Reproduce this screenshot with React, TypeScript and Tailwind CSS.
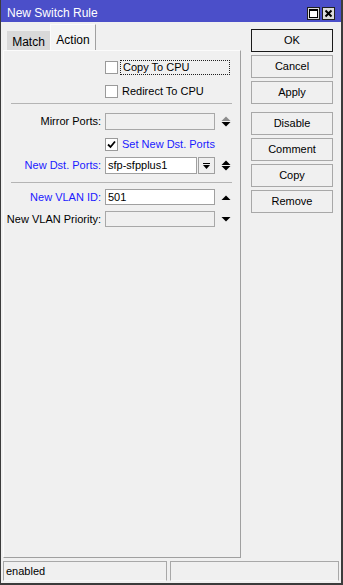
import React from 'react';

// small triangle glyphs used by the spinners next to the fields
function Up({ gray = false }: { gray?: boolean }) {
  return (
    <svg width="10" height="5" viewBox="0 0 10 5" className="block">
      <polygon points="0.5,5 5,0.5 9.5,5" fill={gray ? '#8c8c8c' : '#000'} />
    </svg>
  );
}

function Down() {
  return (
    <svg width="10" height="5" viewBox="0 0 10 5" className="block">
      <polygon points="0.5,0 9.5,0 5,4.5" fill="#000" />
    </svg>
  );
}

function Checkbox({ checked = false }: { checked?: boolean }) {
  return (
    <div className="w-[13px] h-[13px] border border-[#9a9a9a] bg-white flex items-center justify-center shrink-0">
      {checked && (
        <svg width="9" height="9" viewBox="0 0 9 9">
          <path d="M1 4.5 L3.5 7 L8 1.5" stroke="#000" strokeWidth="1.8" fill="none" />
        </svg>
      )}
    </div>
  );
}

function Label({ text, blue = false }: { text: string; blue?: boolean }) {
  return (
    <div className={`w-[101px] pr-[4px] text-right whitespace-nowrap ${blue ? 'text-[#1a1aff]' : 'text-black'}`}>
      {text}
    </div>
  );
}

function Btn({ text, def = false }: { text: string; def?: boolean }) {
  return (
    <div
      className={`h-[23px] flex items-center justify-center bg-[#f0f0f0] border ${
        def ? 'border-[#1a1a1a]' : 'border-[#a8a8a8]'
      }`}
    >
      {text}
    </div>
  );
}

export default function App() {
  return (
    <div className="w-[343px] h-[585px] bg-[#f0f0f0] border-l border-r-2 border-b-2 border-[#3c3c3c] flex flex-col text-[11px] font-['Liberation_Sans',Arial,sans-serif] text-black overflow-hidden">
      {/* Title bar */}
      <div className="h-[22px] bg-[#4b4fc9] flex items-start shrink-0">
        <div className="pl-[6px] pt-[6px] text-white text-[12px] leading-[14px]">New Switch Rule</div>
        <div className="ml-auto mt-[7px] mr-[6px] flex gap-[2px]">
          <div className="w-[13px] h-[13px] border border-[#202020] bg-[#dcdcdc] flex items-center justify-center">
            <div className="w-[9px] h-[9px] border border-black border-t-2 bg-white" />
          </div>
          <div className="w-[13px] h-[13px] border border-[#202020] bg-[#dcdcdc] flex items-center justify-center">
            <svg width="9" height="9" viewBox="0 0 9 9">
              <path d="M1.5 1.5 L7.5 7.5 M7.5 1.5 L1.5 7.5" stroke="#000" strokeWidth="2" />
            </svg>
          </div>
        </div>
      </div>

      {/* Body */}
      <div className="h-[536px] flex shrink-0">
        {/* Tabs + form panel */}
        <div className="pl-[2px] pt-[2px] flex flex-col">
          <div className="h-[26px] flex items-end pl-[4px] text-[12px]">
            <div className="h-[19px] w-[43px] bg-[#d9d9d9] flex items-center justify-center pt-[2px]">Match</div>
            <div className="h-[26px] w-[46px] border-t border-l border-[#fbfbfb] border-r border-r-[#a0a0a0] bg-[#f4f4f4] flex justify-center pt-[6px]">
              Action
            </div>
          </div>
          <div className="w-[238px] flex-1 border-t border-l border-[#fbfbfb] border-r border-b border-r-[#a0a0a0] border-b-[#a0a0a0] flex flex-col">
            {/* Copy To CPU */}
            <div className="mt-[8px] h-[16px] flex items-center">
              <div className="w-[101px]" />
              <Checkbox />
              <div className="ml-[2px] w-[110px] h-[15px] border border-dotted border-[#202020] pl-[2px] flex items-center">
                Copy To CPU
              </div>
            </div>
            {/* Redirect To CPU */}
            <div className="mt-[8px] h-[16px] flex items-center">
              <div className="w-[101px]" />
              <Checkbox />
              <div className="ml-[4px]">Redirect To CPU</div>
            </div>

            <div className="mt-[4px] ml-[7px] mr-[8px] h-px bg-[#b4b4b4]" />

            {/* Mirror Ports */}
            <div className="mt-[9px] h-[17px] flex items-center">
              <Label text="Mirror Ports:" />
              <div className="w-[110px] h-[17px] border border-[#a8a8a8] bg-[#f0f0f0]" />
              <div className="ml-[6px] flex flex-col gap-[1px]">
                <Up gray />
                <Down />
              </div>
            </div>

            {/* Set New Dst. Ports */}
            <div className="mt-[6px] h-[16px] flex items-center">
              <div className="w-[101px]" />
              <Checkbox checked />
              <div className="ml-[4px] text-[#1a1aff]">Set New Dst. Ports</div>
            </div>

            {/* New Dst. Ports */}
            <div className="mt-[5px] h-[17px] flex items-center">
              <Label text="New Dst. Ports:" blue />
              <div className="w-[92px] h-[17px] border border-[#a0a0a0] bg-white pl-[2px] flex items-center">
                sfp-sfpplus1
              </div>
              <div className="ml-[1px] w-[17px] h-[17px] border border-[#a0a0a0] bg-[#f0f0f0] flex flex-col items-center justify-center">
                <div className="w-[7px] h-px bg-black mb-[1px]" />
                <svg width="7" height="4" viewBox="0 0 7 4" className="block">
                  <polygon points="0,0 7,0 3.5,4" fill="#000" />
                </svg>
              </div>
              <div className="ml-[6px] flex flex-col gap-[1px]">
                <Up />
                <Down />
              </div>
            </div>

            <div className="mt-[8px] ml-[7px] mr-[8px] h-px bg-[#b4b4b4]" />

            {/* New VLAN ID */}
            <div className="mt-[6px] h-[16px] flex items-center">
              <Label text="New VLAN ID:" blue />
              <div className="w-[110px] h-[16px] border border-[#a0a0a0] bg-white pl-[2px] flex items-center">501</div>
              <div className="ml-[6px]">
                <Up />
              </div>
            </div>

            {/* New VLAN Priority */}
            <div className="mt-[6px] h-[16px] flex items-center">
              <Label text="New VLAN Priority:" />
              <div className="w-[110px] h-[16px] border border-[#a8a8a8] bg-[#f0f0f0]" />
              <div className="ml-[6px]">
                <Down />
              </div>
            </div>
          </div>
        </div>

        {/* Buttons */}
        <div className="ml-[10px] pt-[7px] w-[82px] flex flex-col">
          <div className="flex flex-col gap-[3px]">
            <Btn text="OK" def />
            <Btn text="Cancel" />
            <Btn text="Apply" />
          </div>
          <div className="mt-[8px] flex flex-col gap-[3px]">
            <Btn text="Disable" />
            <Btn text="Comment" />
            <Btn text="Copy" />
            <Btn text="Remove" />
          </div>
        </div>
      </div>

      {/* Status bar */}
      <div className="mt-[3px] h-[20px] pl-[2px] flex gap-[3px] shrink-0">
        <div className="w-[164px] h-[20px] border-t border-l border-r border-[#a8a8a8] border-b border-b-[#f8f8f8] pl-[2px] flex items-center">
          enabled
        </div>
        <div className="w-[169px] h-[20px] border-t border-l border-r border-[#a8a8a8] border-b border-b-[#f8f8f8]" />
      </div>
    </div>
  );
}
